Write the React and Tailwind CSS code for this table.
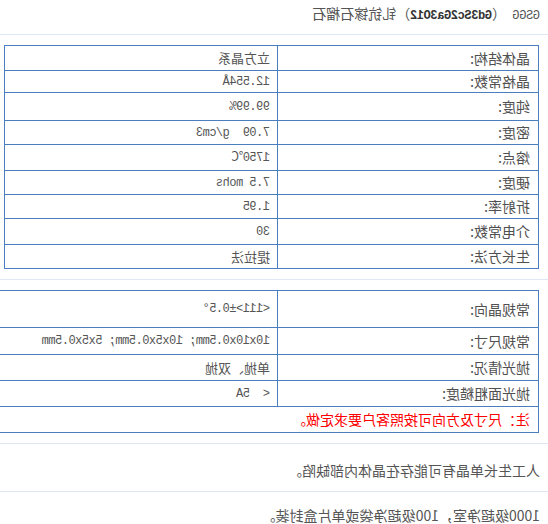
const cjk = "font-['Noto_Sans_CJK_SC',sans-serif]"
const mono = "font-['Liberation_Mono','Noto_Sans_CJK_SC',monospace]"

const props = [
  { label: '晶体结构:', value: '立方晶系', h: 'h-[25px]', zh: true },
  { label: '晶格常数:', value: '12.554Å', h: 'h-[22px]' },
  { label: '纯度:', value: '99.99%', h: 'h-[28px]' },
  { label: '密度:', value: '7.09  g/cm3', h: 'h-[24px]' },
  { label: '熔点:', value: '1750℃', h: 'h-[26px]' },
  { label: '硬度:', value: '7.5 mohs', h: 'h-[24px]' },
  { label: '折射率:', value: '1.95', h: 'h-[24px]' },
  { label: '介电常数:', value: '30', h: 'h-[26px]' },
  { label: '生长方法:', value: '提拉法', h: 'h-[24px]', zh: true },
]

const specs = [
  { label: '常规晶向:', value: '<111>±0.5°', h: 'h-[37px]' },
  { label: '常规尺寸:', value: '10x10x0.5mm; 10x5x0.5mm; 5x5x0.5mm', h: 'h-[27px]' },
  { label: '抛光情况:', value: '单抛、双抛', h: 'h-[26px]', zh: true },
  { label: '抛光面粗糙度:', value: '<  5A', h: 'h-[26px]' },
]

function Row({ r }) {
  return (
    <tr>
      <td className={`${r.h} w-[261px] border border-[#4a7ebf] px-2 py-0 align-middle text-[14px] text-[#505050] ${cjk}`}>
        {r.label}
      </td>
      <td
        className={`${r.h} border border-[#4a7ebf] pl-[7px] py-0 align-middle whitespace-pre text-[#555] ${
          r.zh ? `text-[13px] ${cjk}` : `text-[12px] tracking-[-0.5px] ${mono}`
        }`}
      >
        {r.value}
      </td>
    </tr>
  )
}

export default function App() {
  return (
    <div className="w-[548px] h-[524px] bg-white">
      {/* the reference is a mirrored shot, so the whole page is flipped */}
      <div className="w-[548px] -scale-x-100">
        <div className="h-[34px] pl-2 pt-[3px] leading-[20px] text-[#555] whitespace-pre">
          <span className={`text-[12px] tracking-[-0.4px] ${mono}`}>GSGG </span>
          <span className={`text-[14px] ${cjk}`}>（</span>
          <span className={`text-[12px] tracking-[-0.4px] font-bold text-[#333] ${mono}`}>Gd3Sc2Ga3O12</span>
          <span className={`text-[14px] ${cjk}`}>）钆钪镓石榴石</span>
        </div>

        <div className="border-t border-[#dde7f5] pt-[10px] pb-[10px] pl-[9px]">
          <table className="w-[535px] border-collapse table-fixed">
            <tbody>
              {props.map((r) => (
                <Row key={r.label} r={r} />
              ))}
            </tbody>
          </table>
        </div>

        <div className="border-t border-[#dde7f5] pt-[10px] pb-[10px] pl-[9px]">
          <table className="w-[560px] border-collapse table-fixed">
            <tbody>
              {specs.map((r) => (
                <Row key={r.label} r={r} />
              ))}
              <tr>
                <td colSpan={2} className={`h-[26px] border border-[#4a7ebf] px-2 py-0 align-middle text-[14px] text-[#ff0000] ${cjk}`}>
                  注：尺寸及方向可按照客户要求定做。
                </td>
              </tr>
            </tbody>
          </table>
        </div>

        <div className={`h-[48px] border-t border-[#dde7f5] pl-2 pt-[19px] leading-[14px] text-[14px] text-[#555] ${cjk}`}>
          人工生长单晶有可能存在晶体内部缺陷。
        </div>
        <div className={`h-[32px] border-t border-[#dde7f5] pl-2 pt-[16px] leading-[14px] text-[14px] text-[#555] ${cjk}`}>
          1000级超净室，100级超净袋或单片盒封装。
        </div>
      </div>
    </div>
  )
}
